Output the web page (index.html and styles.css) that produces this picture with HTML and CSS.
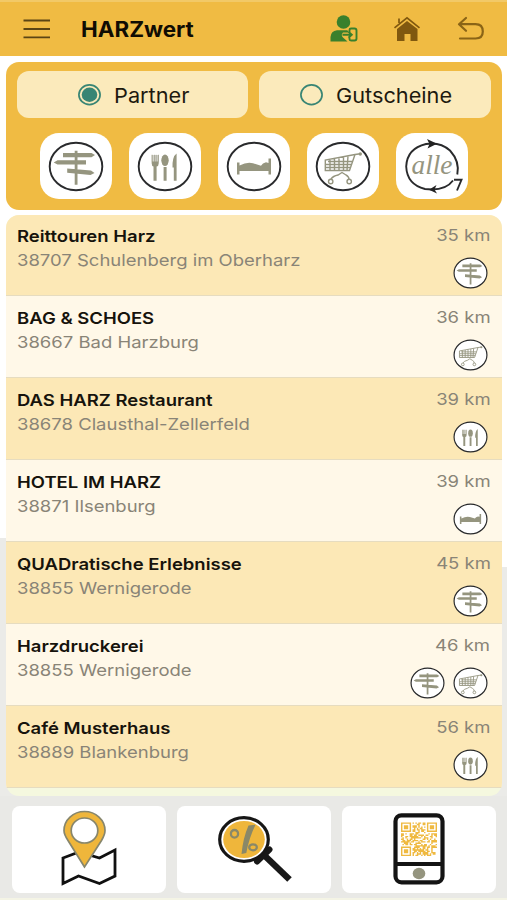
FILE: index.html
```html
<!DOCTYPE html>
<html lang="de">
<head>
<meta charset="utf-8">
<title>HARZwert</title>
<link rel="stylesheet" href="styles.css">
</head>
<body>
<svg class="defs" aria-hidden="true">
  <symbol id="sign" viewBox="-28 -25.5 56 51">
    <ellipse class="ring" rx="26.3" ry="23.8"/>
    <path class="fill" d="M-1.3-15.8H1.5V18.2H-1.3ZM-13-13.6H15.500L19-11.400L15.500-9.300H-13ZM-22.3-4L-18.5-6.2H10V-2H-18.5ZM-8.8 2L15 4L18.500 6.600L14.500 8.600L-8.8 6.200Z"/>
  </symbol>
  <symbol id="food" viewBox="-28 -25.5 56 51">
    <ellipse class="ring" rx="26.3" ry="23.8"/>
    <path class="pale" d="M-13.3-11.500H-6.300V-4H-13.300Z"/>
    <path class="fill" d="M-13.3-11.7H-12.5V-5H-11V-11.7H-10.400V-5H-9.2V-11.7H-8.6V-5H-7.1V-11.7H-6.3V-3Q-6.3-.5-8.4 0V14.3H-11.5V0Q-13.3-.5-13.3-3ZM-1.4.5H1.6V14.3H-1.4ZM11.6-13V14.3H8.8V1H7.5Q7.2-10 11.6-13Z"/>
    <ellipse class="fill" cx="0" cy="-6.2" rx="3.7" ry="5.8"/>
  </symbol>
  <symbol id="bed" viewBox="-28 -25.5 56 51">
    <ellipse class="ring" rx="26.3" ry="23.8"/>
    <path class="fill" d="M-17-4H-14.5V-1Q-7-4.8-1-3.200L7-.8Q8.500-3.500 12-4.200L14.500-3.500V-8H17V8H14.500V4.600H-14.500V8H-17Z"/>
  </symbol>
  <symbol id="cart" viewBox="-28 -25.5 56 51">
    <ellipse class="ring" rx="26.3" ry="23.8"/>
    <path class="line" d="M17.500-12.700L12-12L-17.700-6.500V4H6.500L12-12M-17.500-2H8.500M-17.500 1H7.500M-13-7V4M-8.500-8V4M-4-9V4M.5-9.700V4M5-10.500L4 4M-15-5H9.500M-12 12.500Q-10 9.500-5 8.500L-1 6L3 8.500Q6 10 6 13"/>
    <circle class="line" cx="-12.300" cy="15" r="2.200"/><circle class="line" cx="6.200" cy="15" r="2.200"/><circle class="fill" cx="17.300" cy="-12.500" r="1.700"/>
  </symbol>
</svg>

<header class="topbar">
  <svg class="menu" viewBox="0 0 28 20"><path d="M.5 1.500H27M.5 10H27M.5 18.300H27"/></svg>
  <h1>HARZwert</h1>
  <svg class="user" viewBox="0 0 28 28">
    <circle cx="13.500" cy="7" r="6.800"/><path d="M.5 26.500V22Q1 16 7 15.300H17Q18 15.500 18.500 16.500V17.500H13Q10.500 20 13 22.500L17.500 26.500Z"/>
    <path class="exit" d="M19.500 17V15Q19.500 13.500 21 13.500H24.500Q26.500 13.500 26.500 15.500V23.500Q26.500 25.500 24.500 25.500H21Q19.500 25.500 19.500 24V22.800M12.500 19.700H21.500M18.500 16.700L21.800 19.700L18.500 22.700"/>
  </svg>
  <svg class="home" viewBox="0 0 28 26"><path d="M4 13L14 5L24.500 13V25H17.500V18H11.500V25H4Z"/><path class="roof" d="M1.500 11.800L14 1.800L26.500 11.800M6 7V2.500"/></svg>
  <svg class="back" viewBox="0 0 28 26"><path d="M9 2L2 8.200L9 14.800M2.500 8.200H18.500Q25.800 8.200 25.800 15.500Q25.800 22.500 18.500 22.500H3"/></svg>
</header>

<section class="filter">
  <div class="modes">
    <div class="mode"><svg class="radio" viewBox="0 0 23 21.500"><ellipse cx="11.500" cy="10.750" rx="10.600" ry="9.800"/><ellipse class="dot" cx="11.500" cy="10.750" rx="7.800" ry="7.200"/></svg><span>Partner</span></div>
    <div class="mode second"><svg class="radio" viewBox="0 0 23 21.500"><ellipse cx="11.500" cy="10.750" rx="10.600" ry="9.800"/></svg><span>Gutscheine</span></div>
  </div>
  <div class="tiles">
    <div class="tile"><svg><use href="#sign"/></svg></div>
    <div class="tile"><svg><use href="#food"/></svg></div>
    <div class="tile"><svg><use href="#bed"/></svg></div>
    <div class="tile"><svg><use href="#cart"/></svg></div>
    <div class="tile"><svg class="all" viewBox="-28 -25.500 56 51">
      <path class="ring" d="M25.300 8Q28-5 18-16Q8-25 -6-22.500Q-25-18-25.800 0Q-25 18-7 22.500Q13 25 21 14"/>
      <path class="head" d="M-5-27.500L5-22.800L-4.500-18L-2.500-22.500ZM4.500 18.500L-3 23.300L5 27L2.500 23Z"/>
      <path class="ring" d="M22 13.300H29.500L25 24"/>
      <text x="-20.500" y="7.500" textLength="41" lengthAdjust="spacingAndGlyphs">alle</text>
    </svg></div>
  </div>
</section>

<main class="list">
  <article class="row"><div><h2>Reittouren Harz</h2><p>38707 Schulenberg im Oberharz</p></div><div class="side"><span class="km">35 km</span><div class="icons"><svg><use href="#sign"/></svg></div></div></article>
  <article class="row"><div><h2>BAG &amp; SCHOES</h2><p>38667 Bad Harzburg</p></div><div class="side"><span class="km">36 km</span><div class="icons"><svg><use href="#cart"/></svg></div></div></article>
  <article class="row"><div><h2>DAS HARZ Restaurant</h2><p>38678 Clausthal-Zellerfeld</p></div><div class="side"><span class="km">39 km</span><div class="icons"><svg><use href="#food"/></svg></div></div></article>
  <article class="row"><div><h2>HOTEL IM HARZ</h2><p>38871 Ilsenburg</p></div><div class="side"><span class="km">39 km</span><div class="icons"><svg><use href="#bed"/></svg></div></div></article>
  <article class="row"><div><h2>QUADratische Erlebnisse</h2><p>38855 Wernigerode</p></div><div class="side"><span class="km">45 km</span><div class="icons"><svg><use href="#sign"/></svg></div></div></article>
  <article class="row"><div><h2>Harzdruckerei</h2><p>38855 Wernigerode</p></div><div class="side"><span class="km">46 km</span><div class="icons"><svg><use href="#sign"/></svg><svg><use href="#cart"/></svg></div></div></article>
  <article class="row"><div><h2>Café Musterhaus</h2><p>38889 Blankenburg</p></div><div class="side"><span class="km">56 km</span><div class="icons"><svg><use href="#food"/></svg></div></div></article>
</main>

<nav class="bottom">
  <a><svg viewBox="0 0 154 87">
    <path class="map" d="M51 52L67 46L87.500 52L103 44V70L87.500 77.500L66.500 70L51 77.500Z"/>
    <path class="pin" d="M72.500 61L56 34.500Q52 28.500 52 24.500A20.500 19 0 0 1 93 24.500Q93 28.500 89.500 34.500Z"/>
    <ellipse class="hole" cx="72.500" cy="24.500" rx="13.300" ry="12.500"/>
  </svg></a>
  <a><svg viewBox="0 0 154 87">
    <path class="grip" d="M88 50L112.500 73.500"/><path class="collar" d="M80 55.500L92.500 43.500"/>
    <ellipse class="lens" cx="67" cy="33.500" rx="24.300" ry="21.800"/><ellipse class="glass" cx="67" cy="33.500" rx="20.800" ry="18.600"/>
    <ellipse class="pct" cx="57.500" cy="27.800" rx="3.600" ry="3.800"/><ellipse class="pct" cx="76" cy="41.300" rx="3.800" ry="3"/>
    <path class="slash" d="M71.500 19.500L78.500 18.800Q72 32 69.300 47L64.500 48Q66 32 71.500 19.500Z"/>
  </svg></a>
  <a><svg viewBox="0 0 154 87">
    <rect class="phone" x="53.500" y="9.300" width="47" height="67" rx="6"/><path class="phone" d="M53 58H101"/>
    <ellipse class="fill" cx="77" cy="67.500" rx="6.300" ry="5.800"/>
    <svg id="qr" x="59" y="16.500" width="36" height="33.500" viewBox="0 0 25 25" preserveAspectRatio="none"></svg>
  </svg></a>
</nav>
<script src="script.js"></script>
</body>
</html>
```
FILE: styles.css
```css
* { box-sizing: border-box; }
body {
  margin: 0; width: 507px; height: 900px; overflow: hidden;
  font-family: Inter, "Liberation Sans", sans-serif; color: #16130c;
  background: linear-gradient(#fff 0 538px, #ebebe8 538px) 0 0 / 50% 100% no-repeat,
    linear-gradient(#fff 0 567px, #ebebe8 567px) 100% 0 / 50% 100% no-repeat;
}
h1, h2, p { margin: 0; white-space: nowrap; transform-origin: left center; }
svg { display: block; overflow: visible; }
.defs { width: 0; height: 0; position: absolute; }
.ring { fill: none; stroke: #292a2c; stroke-width: 1.9; }
ellipse.ring { fill: #fff; }
.fill { fill: #95957f; }
.pale { fill: #d3d3cb; }
.line { fill: none; stroke: #95957f; stroke-width: 1.4; }

.topbar {
  height: 56px; display: flex; align-items: center; padding: 2px 22.5px 0 22.5px;
  background: linear-gradient(#f2c967 2px, #f0bb43 2px);
}
.menu { width: 28px; height: 20px; fill: none; stroke: #5b4514; stroke-width: 1.8; }
h1 { font-size: 21px; font-weight: 700; line-height: 28px; margin-left: 30.5px; color: #100c03; transform: translateY(.5px) scaleX(1.066); }
.user { width: 28px; height: 28px; margin-left: auto; fill: #39802c; }
.exit { fill: none; stroke: #39802c; stroke-width: 1.9; }
.home { width: 28px; height: 26px; margin-left: 35px; fill: #80580f; }
.roof { fill: none; stroke: #80580f; stroke-width: 1.7; }
.back { width: 28px; height: 26px; margin-left: 36px; fill: none; stroke: #8a6416; stroke-width: 2.2; stroke-linecap: round; stroke-linejoin: round; }

.filter {
  margin: 5.5px 5.5px 0 6px; height: 148px; border-radius: 13px;
  background: #f0bb43; padding: 9.5px 10.5px 0;
}
.modes { display: grid; grid-template-columns: 1fr 1fr; gap: 11px; }
.mode {
  height: 47px; border-radius: 12px; background: #fbeabb;
  display: flex; align-items: center; padding-left: 61px; font-size: 20.5px; color: #1d190f;
}
.mode span { transform: translateY(.5px) scaleX(1.06); transform-origin: left center; }
.mode.second { padding-left: 41px; }
.radio { width: 23px; height: 21.5px; margin-right: 13px; fill: none; stroke: #388574; stroke-width: 1.7; }
.dot { fill: #388574; stroke: none; }
.tiles { display: flex; gap: 16.6px; margin: 15px 0 0 23px; }
.tile {
  width: 72.5px; height: 66px; border-radius: 19px; background: #fff;
  display: grid; place-items: center;
}
.tile svg { width: 56px; height: 51px; }
.head { fill: #222; }
.all text { font: italic 28px "Liberation Serif", serif; fill: #95957f; }

.list {
  margin: 5px 5.5px 0 6px; height: 581px; border-radius: 13px;
  overflow: hidden; background: #f5f8df;
}
.row {
  height: 81.9px; display: flex; justify-content: space-between;
  padding: 9.7px 11px 0 11px; background: #fce8b6; border-bottom: 1px solid #e6dcc0;
}
.row:nth-child(even) { background: #fff8e8; }
h2 { font-size: 16.5px; font-weight: 600; line-height: 24px; transform: scaleX(1.12); }
p { font-size: 16.5px; line-height: 24px; color: #898477; transform: scaleX(1.12); }
.side { display: flex; flex-direction: column; align-items: flex-end; }
.km { font-size: 16.5px; line-height: 22px; color: #898477; transform: scaleX(1.12); transform-origin: right center; }
.icons { display: flex; gap: 8px; margin: 11px 3px 0 0; }
.icons svg { width: 35px; height: 32px; }

.bottom {
  height: 104.5px; display: grid; grid-template-columns: repeat(3, 1fr); gap: 10.5px;
  padding: 10.5px 11px 7px 11.5px; background: linear-gradient(#e9e9e6 102.5px, #f4f4e5 102.5px);
}
.bottom a { background: #fff; border-radius: 8px; }
.bottom a > svg { width: 154px; height: 87px; }
.map { fill: none; stroke: #101010; stroke-width: 2.8; }
.pin { fill: #efb63b; stroke: #87866c; stroke-width: 1.7; }
.hole { fill: #fff; stroke: #87866c; stroke-width: 1.7; }
.grip { stroke: #181818; stroke-width: 6.5; }
.collar { stroke: #181818; stroke-width: 6; stroke-linecap: round; }
.lens { fill: #fff; stroke: #161616; stroke-width: 3.2; }
.glass { fill: #efb63b; }
.pct { fill: none; stroke: #8a8868; stroke-width: 2.3; }
.slash { fill: #8a8868; }
.phone { fill: none; stroke: #141414; stroke-width: 4.2; }
#qr { fill: #efb940; }
```
FILE: script.js
```js
const size = 25;
let seed = 41;
const random = () => (seed = (seed * 1103515245 + 12345) % 2147483648) / 2147483648;
let d = "";
const finder = (x, y, fx, fy) => {
  const r = Math.max(Math.abs(x - fx), Math.abs(y - fy));
  return r > 4 ? null : r === 3 || r < 2;
};
for (let y = 0; y < size; y++) {
  for (let x = 0; x < size; x++) {
    const f = finder(x, y, 3, 3) ?? finder(x, y, 21, 3) ?? finder(x, y, 3, 21);
    if (f ?? random() < 0.56) d += `M${x} ${y}h1v1h-1z`;
  }
}
document.getElementById("qr").innerHTML = `<path d="${d}"/>`;
```
